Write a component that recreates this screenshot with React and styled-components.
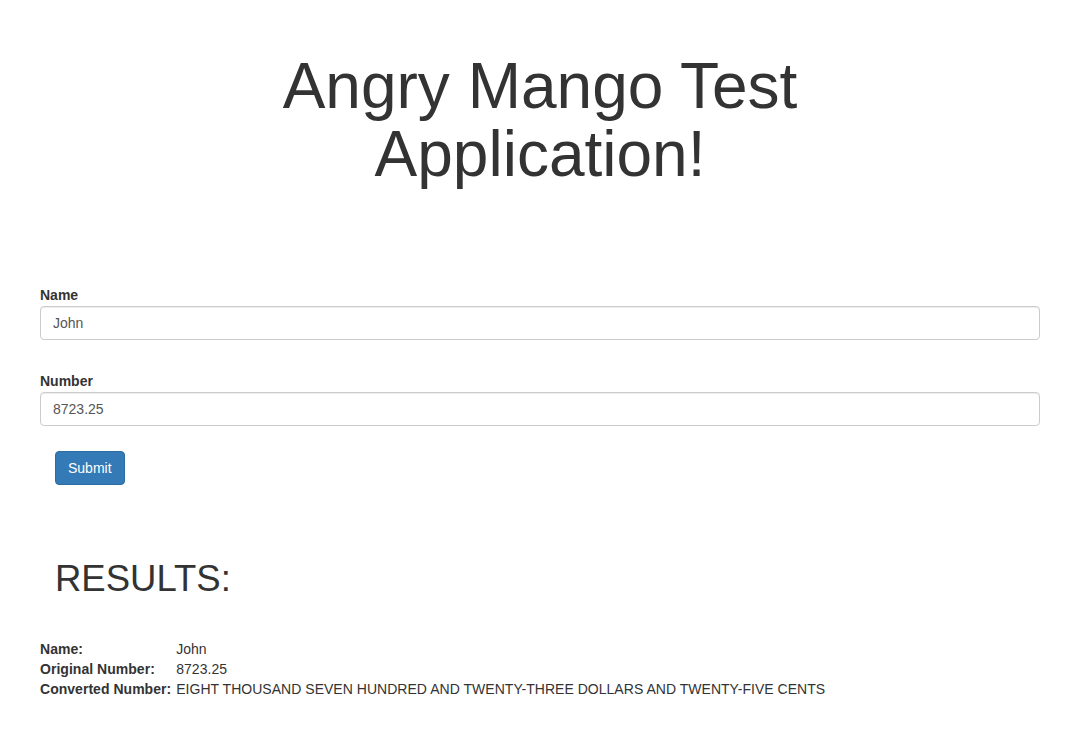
import React from "react";
import styled, { createGlobalStyle } from "styled-components";

const Global = createGlobalStyle`
  html, body { margin: 0; padding: 0; background: #fff; }
  body {
    font-family: "Liberation Sans", Arial, Helvetica, sans-serif;
    font-size: 14px;
    line-height: 20px;
    color: #333;
  }
  * { box-sizing: border-box; }
`;

const Page = styled.div`
  width: 1000px;
  margin-left: 40px;
  padding-top: 52px;
  padding-bottom: 40px;
`;

const Title = styled.h1`
  margin: 0 auto;
  max-width: 640px;
  text-align: center;
  font-size: 64px;
  line-height: 68px;
  font-weight: 400;
  color: #333;
`;

const Form = styled.form`
  margin-top: 98px;
  display: flex;
  flex-direction: column;
`;

const Group = styled.div`
  display: flex;
  flex-direction: column;
  margin-top: ${(p) => p.$gap || 0}px;
`;

const Label = styled.label`
  font-weight: 700;
  font-size: 14px;
  line-height: 18px;
  margin-bottom: 2px;
`;

const Input = styled.input`
  height: 34px;
  width: 100%;
  padding: 6px 12px;
  font-family: inherit;
  font-size: 14px;
  color: #555;
  background: #fff;
  border: 1px solid #ccc;
  border-radius: 4px;
  box-shadow: inset 0 1px 1px rgba(0, 0, 0, 0.075);
  outline: none;
`;

const Button = styled.button`
  align-self: flex-start;
  margin: 25px 0 0 15px;
  height: 34px;
  padding: 6px 12px;
  font-family: inherit;
  font-size: 14px;
  line-height: 20px;
  color: #fff;
  background: #337ab7;
  border: 1px solid #2e6da4;
  border-radius: 4px;
  cursor: pointer;
`;

const ResultsHeading = styled.h2`
  margin: 73px 0 0 15px;
  font-size: 36.5px;
  line-height: 42px;
  font-weight: 400;
  color: #333;
`;

const ResultsGrid = styled.div`
  margin-top: 39px;
  display: grid;
  grid-template-columns: max-content 1fr;
  column-gap: 5px;
  line-height: 20px;
  letter-spacing: 0.03px;
`;

const Key = styled.div`
  font-weight: 700;
`;

const Value = styled.div``;

export default function App() {
  const rows = [
    ["Name:", "John"],
    ["Original Number:", "8723.25"],
    [
      "Converted Number:",
      "EIGHT THOUSAND SEVEN HUNDRED AND TWENTY-THREE DOLLARS AND TWENTY-FIVE CENTS",
    ],
  ];
  return (
    <>
      <Global />
      <Page>
        <Title>Angry Mango Test Application!</Title>
        <Form onSubmit={(e) => e.preventDefault()}>
          <Group>
            <Label htmlFor="name">Name</Label>
            <Input id="name" defaultValue="John" />
          </Group>
          <Group $gap={32}>
            <Label htmlFor="number">Number</Label>
            <Input id="number" defaultValue="8723.25" />
          </Group>
          <Button type="submit">Submit</Button>
        </Form>
        <ResultsHeading>RESULTS:</ResultsHeading>
        <ResultsGrid>
          {rows.map(([k, v]) => (
            <React.Fragment key={k}>
              <Key>{k}</Key>
              <Value>{v}</Value>
            </React.Fragment>
          ))}
        </ResultsGrid>
      </Page>
    </>
  );
}
